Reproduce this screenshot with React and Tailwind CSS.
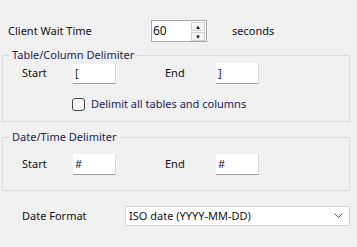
export default function App() {
  const field = 'w-[43px] h-[21px] bg-white border-b border-r border-b-[#a0a0a0] border-r-[#dadada] pl-[2px] leading-[20px] text-[#1a1a4a]';

  return (
    <div className="w-[357px] h-[247px] bg-[#f0f0f0] text-[11px] text-[#111] overflow-hidden"
      style={{ fontFamily: '"Noto Sans", "Open Sans", sans-serif' }}>
      {/* client wait time */}
      <div className="flex items-center pt-[20px] pl-[8px] h-[42px]">
        <span className="w-[143px]">Client Wait Time</span>
        <div className="flex w-[56px] h-[22px] border border-[#a8a8a8] bg-white">
          <span className="flex-1 pl-[1px] leading-[20px] text-[12px]">60</span>
          <div className="flex flex-col gap-[1px] w-[15px] pt-[1px] pr-[1px]">
            <div className="h-[9px] border border-[#d0d0d0] bg-[#f4f4f4] flex items-center justify-center text-[6px] leading-none">▲</div>
            <div className="h-[9px] border border-[#d0d0d0] bg-[#f4f4f4] flex items-center justify-center text-[6px] leading-none">▼</div>
          </div>
        </div>
        <span className="ml-[25px]">seconds</span>
      </div>

      {/* table / column delimiter */}
      <div className="relative ml-[2px] mt-[13px] w-[348px] h-[67px] border border-[#dadada] pl-[19px] pt-[7px]">
        <span className="absolute -top-[9px] left-[6px] px-[3px] bg-[#f0f0f0] text-[#23235a]">Table/Column Delimiter</span>
        <div className="flex items-center h-[21px]">
          <span className="w-[51px]">Start</span>
          <div className={field}>[</div>
          <span className="ml-[49px] w-[51px]">End</span>
          <div className={field}>]</div>
        </div>
        <div className="flex items-center mt-[12px] ml-[50px]">
          <div className="w-[13px] h-[13px] rounded-[3px] border border-[#444] bg-[#f7f7f7]"></div>
          <span className="ml-[6px] text-[#23235a]">Delimit all tables and columns</span>
        </div>
      </div>

      {/* date / time delimiter */}
      <div className="relative ml-[2px] mt-[15px] w-[348px] h-[54px] border border-[#dadada] pl-[19px] pt-[16px]">
        <span className="absolute -top-[9px] left-[6px] px-[3px] bg-[#f0f0f0] text-[#23235a]">Date/Time Delimiter</span>
        <div className="flex items-center h-[21px]">
          <span className="w-[51px]">Start</span>
          <div className={field}>#</div>
          <span className="ml-[49px] w-[51px]">End</span>
          <div className={field}>#</div>
        </div>
      </div>

      {/* date format */}
      <div className="flex items-center mt-[15px] pl-[22px] h-[20px]">
        <span className="w-[103px]">Date Format</span>
        <div className="flex items-center w-[225px] h-[20px] bg-white border border-[#d4d4d4] pl-[3px] pr-[6px]">
          <span className="flex-1">ISO date (YYYY-MM-DD)</span>
          <svg width="9" height="6" viewBox="0 0 9 6" fill="none" stroke="#555" strokeWidth="1">
            <path d="M0.5 0.5 L4.5 4.5 L8.5 0.5" />
          </svg>
        </div>
      </div>
    </div>
  );
}
